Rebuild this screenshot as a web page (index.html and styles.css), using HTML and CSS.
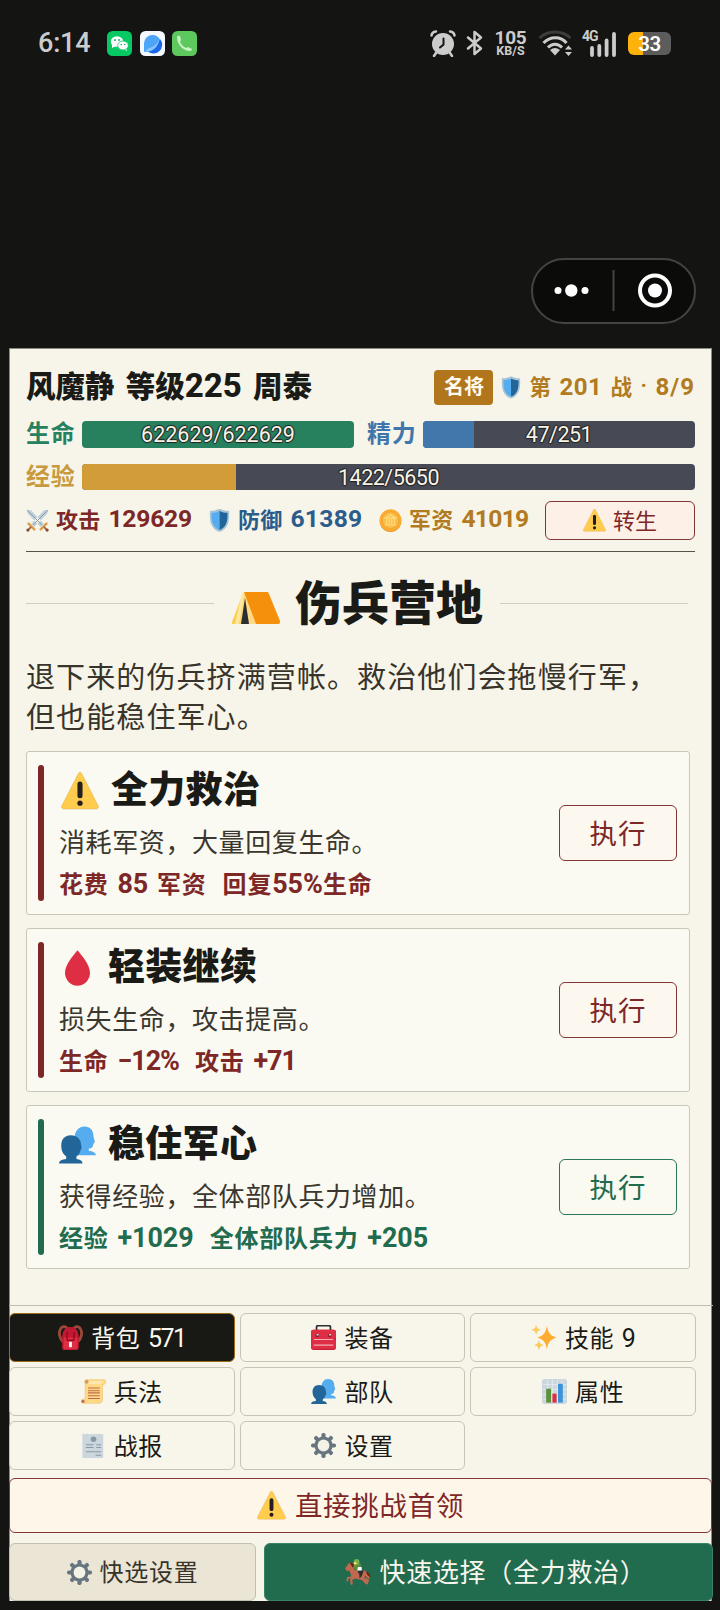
FILE: index.html
```
<!DOCTYPE html>
<html lang="zh-CN">
<head>
<meta charset="utf-8">
<title>伤兵营地</title>
<link rel="stylesheet" href="styles.css">
</head>
<body>
<svg class="defs" width="0" height="0" aria-hidden="true">
  <defs>
    <symbol id="warn" viewBox="0 0 36 36"><path fill="#FFCC4D" stroke="#d9b457" stroke-width=".5" d="M2.65 35C.81 35-.04 33.66.77 32.02L16.53 1.23c.81-1.64 2.13-1.64 2.94 0l15.76 30.79c.81 1.64-.04 2.98-1.88 2.98z"/><path fill="#231F20" d="M15.6 11.5a2.4 2.4 0 0 1 4.8 0v11a2.4 2.4 0 0 1-4.8 0z"/><circle cx="18" cy="29.5" r="2.5" fill="#231F20"/></symbol>
    <symbol id="shield" viewBox="0 0 33 36"><path fill="#a9c5d6" d="M31.500 3s-5 0-8-1c-3-1-5-2-7-2s-4 1-7 2-8 1-8 1-1 14 2 21 8 11 13 12c5-1 10-5 13-12S31.500 3 31.500 3z"/><path fill="#55ACEE" d="M16.500 3c-4 2-8 3-12.500 3 0 10 .5 14 2.500 18 2 4 6 8 10 9z"/><path fill="#226699" d="M16.500 3c4 2 8 3 12.500 3 0 10-.5 14-2.500 18-2 4-6 8-10 9z"/></symbol>
    <symbol id="swords" viewBox="0 0 36 36"><path fill="#c5d1da" d="M1 1l7 1 20 21-5 5L3 8zM35 1l-7 1L8 23l5 5L33 8z"/><path fill="none" stroke="#8299aa" stroke-width="1.500" d="M2 2l23 23M34 2L11 25"/><path stroke="#d99e52" stroke-width="4" stroke-linecap="round" d="M4 23l9 9M32 23l-9 9"/><path stroke="#a76539" stroke-width="3" d="M8 28l-5 5M28 28l5 5"/><circle cx="3" cy="33" r="2.500" fill="#8a4b38"/><circle cx="33" cy="33" r="2.500" fill="#8a4b38"/></symbol>
    <symbol id="coin" viewBox="0 0 36 36"><circle cx="18" cy="19" r="17" fill="#e79625"/><circle cx="18" cy="17.500" r="17" fill="#ffac33"/><circle cx="18" cy="17.500" r="13" fill="#f9bd48" stroke="#e69c2d"/><path fill="none" stroke="#ffdc7c" stroke-width="2" d="M10 14l8-5 8 5zM12 15v8M16 15v8M20 15v8M24 15v8M9 25h18"/></symbol>
    <symbol id="tent" viewBox="0 0 48 32"><path fill="#ffcc4d" d="M11 1h4L25 30c0 2-1 2-3 2H1c-1 0-1-1-1-2z"/><path fill="#ffe8a0" d="M10 1h3l-6 31H3z"/><path fill="#f4900c" d="M12 0h23c1 0 1 0 2 2l11 27c0 2 0 3-2 3H24z"/><path fill="#ffd983" d="M12 1l-4 31h4l1-26 4 26h7z"/><path fill="#292f33" d="M13 6L9 32h8z"/></symbol>
    <symbol id="drop" viewBox="0 0 26 37"><path fill="#DD2E44" d="M0 23.500C0 15 9 5 13 0c4 5 13 15 13 23.500C26 31 20.200 37 13 37S0 31 0 23.500z"/></symbol>
    <symbol id="people" viewBox="0 0 36 36"><path fill="#55ACEE" d="M24.500 0C30.500 0 33.500 4 33.500 9c0 2 1.300 4 1.300 5.500s-1.300 1.500-1.500 3c-.3 2-1 4-4.300 4v2c3 .5 6.500 1 7 4.500H15V12c0-7 4-12 9.500-12z"/><path fill="#269" d="M11.500 8.500c6 0 10 4 10 9.500 0 1.500.8 2 .4 3.500-.4 1-.9 1-1.200 2.500-.5 2-2 4-3.700 5v2.500c3 .5 5.500 1 6 4.500H0c.3-3.500 3-4 7-4.500V29c-3-2-4.800-5-4.800-10.500 0-6 3.300-10 9.300-10z"/></symbol>
    <symbol id="backpack" viewBox="0 0 36 36"><path fill="none" stroke="#9c4839" stroke-width="4" d="M8 25C2 20 1 11 3 7c3-7 10-6 11 1M28 25c6-5 7-14 5-18-3-7-10-6-11 1"/><path fill="#be1931" d="M11 5c0-3 14-3 14 0 4 3 5 8 5 13v14c0 3-2 4-4 4H10c-3 0-4-1-4-4V18c0-5 1-10 5-13z"/><path fill="#dd2e44" d="M8 18h20v14c0 3-2 3-4 3H12c-3 0-4 0-4-3z"/><path stroke="#a0041e" stroke-width="2" d="M13 10v12h10V10" fill="none"/><rect x="16" y="24" width="4" height="8" rx="1" fill="#fff"/></symbol>
    <symbol id="toolbox" viewBox="0 0 36 36"><path fill="none" stroke="#292f33" stroke-width="2.500" d="M8 8V3q0-2 2-2h16q2 0 2 2v5"/><rect y="7" width="36" height="29" rx="4" fill="#be1931"/><rect y="7" width="36" height="14" rx="3" fill="#dd2e44"/><path fill="#dd2e44" d="M0 21h36v11q0 3-4 3H4q-4 0-4-3z"/><path stroke="#f4abba" stroke-width="1.500" d="M4 21h28M4 29h28"/><circle cx="9" cy="15" r="2.500" fill="#8b1c2b"/><circle cx="27" cy="15" r="2.500" fill="#8b1c2b"/><path stroke="#ccd6dd" stroke-width="2" d="M8 14h3M26 14h3"/></symbol>
    <symbol id="spark" viewBox="0 0 36 36"><path fill="#FFAC33" d="M21.500 1c2 11 5 14 14 17-9 3-12 6-14 17-2-11-5-14-14-17 9-3 12-6 14-17z"/><path fill="#FFCC4D" stroke="#e7b54b" stroke-width=".5" d="M6 1c1 4 2 5 6 6-4 1-5 2-6 6-1-4-2-5-6-6 4-1 5-2 6-6zM10 23c1 4 2 5 6 6-4 1-5 2-6 6-1-4-2-5-6-6 4-1 5-2 6-6z"/></symbol>
    <symbol id="scroll" viewBox="0 0 36 36"><path fill="#ffd983" stroke="#e5b961" stroke-width=".7" d="M7 1h26q3 0 3 3t-3 4h-2v22q0 5-5 5H3q-3 0-3-3t4-3h2V5z"/><path fill="#ffe8b6" d="M6 3h24v4H10z"/><circle cx="8" cy="4" r="3" fill="#d99e52"/><circle cx="3" cy="32" r="2.300" fill="#c1694f"/><path stroke="#c1694f" stroke-width="1.500" d="M10 13h17M10 17h17M10 20h17M10 24h17M10 28h17"/></symbol>
    <symbol id="chart" viewBox="0 0 36 36"><rect width="36" height="36" rx="4" fill="#ccd6dd"/><path stroke="#e9eff3" stroke-width="1" d="M1 8h34M1 15h34M1 22h34M1 29h34M8 1v34M15 1v34M22 1v34M29 1v34"/><path fill="#5c913b" d="M6 14h7v20H6z"/><path fill="#dd2e44" d="M15 21h6v13h-6z"/><path fill="#3b94d9" d="M23 7h7v27h-7z"/></symbol>
    <symbol id="report" viewBox="0 0 32 36"><path fill="#ccd6dd" d="M0 1h2l2 1 2-1h2l2 1 2-1h2l2 1 2-1h2l2 1 2-1h2l2 1 2-1v35H0z"/><circle cx="16" cy="9" r="4" fill="#8899a6"/><path stroke="#8899a6" stroke-width="1.500" d="M5 17h11M20 17h7M5 21h11M20 21h7M5 27h22M19 32h8"/></symbol>
    <symbol id="gear" viewBox="0 0 36 36"><g fill="#66757F"><rect x="15" y="0" width="6" height="36" rx="2.500"/><rect x="15" y="0" width="6" height="36" rx="2.500" transform="rotate(45 18 18)"/><rect x="15" y="0" width="6" height="36" rx="2.500" transform="rotate(90 18 18)"/><rect x="15" y="0" width="6" height="36" rx="2.500" transform="rotate(135 18 18)"/><circle cx="18" cy="18" r="13"/></g><circle cx="18" cy="18" r="8.500" class="gear-hole"/></symbol>
    <symbol id="horse" viewBox="0 0 36 36"><path fill="#c1694f" d="M0 13l6-8 5 2 5 9h11l6 4 1 8-3-1-3-4-1 4 4 4-2 4-6-6-9-2-4 2 1 6-3 1-1-7 2-5-3-8-3 1z"/><path fill="none" stroke="#c1694f" stroke-width="2.500" d="M12 25l-8 1-1 5M28 27l4 3-2 5"/><path fill="#662113" d="M6 5l6 2 5 7-4 1zM29 17q6 2 6 8l-4-3z"/><path fill="#5c913b" d="M12 8l9-2 3 9-5 4-5-5-3 0z"/><path fill="#292f33" d="M17 16h9l-3 8-3 3v-5z"/><path fill="#fff" d="M18 11h5v5h-6z"/><circle cx="16" cy="4" r="4" fill="#77b255"/><circle cx="14" cy="6" r="2" fill="#ffdc5d"/></symbol>
  </defs>
</svg>

<div class="statusbar">
  <span class="clock">6:14</span>
  <svg class="app-ico" viewBox="0 0 25 25"><rect width="25" height="25" rx="5.500" fill="#07c963"/><ellipse cx="10" cy="10.500" rx="6.200" ry="5.300" fill="#fff"/><path fill="#fff" d="M5 13l0 4 4-2zM19 16l1 4-4-2z"/><ellipse cx="16" cy="14.500" rx="5.300" ry="4.500" fill="#fff" stroke="#07c963" stroke-width=".8"/><g fill="#07a650"><circle cx="8" cy="9" r=".9"/><circle cx="12" cy="9" r=".9"/><circle cx="14.300" cy="13.500" r=".7"/><circle cx="17.800" cy="13.500" r=".7"/></g></svg>
  <svg class="app-ico" viewBox="0 0 25 25"><rect width="25" height="25" rx="5.500" fill="#f5f8fe"/><path fill="#4ca5f8" d="M4 21V12.500A8.500 8.500 0 1 1 12.500 21z"/><path fill="#1969e8" d="M20 8a8.500 8.500 0 0 1-13 11.500C14 19 17 15 20 8z"/><path fill="#8cc5fa" d="M4 21l5-4c5-1 8-4 10.500-8.500C18 16 13 20 8 20.500z"/></svg>
  <svg class="app-ico" viewBox="0 0 25 25"><rect width="25" height="25" rx="5.500" fill="#5cc85e"/><path fill="#c9f2c5" d="M5 6q1-2 3-1l1 4-1 2q2 4 6 6l2-1 4 2q0 2-2 2C11 20 5 13 5 6z"/></svg>
  <span class="spacer"></span>
  <svg class="alarm" viewBox="0 0 26 27"><circle cx="13" cy="14" r="11" fill="#ccc"/><path stroke="#ccc" stroke-width="2.500" stroke-linecap="round" fill="none" d="M1.500 5.500Q2 2 6 1.500M24.500 5.500Q24 2 20 1.500M6 23l-2 3M20 23l2 3"/><path stroke="#141412" stroke-width="2" stroke-linecap="round" fill="none" d="M13.500 8.500v6l-3.500 3"/></svg>
  <svg class="bt" viewBox="0 0 17 26"><path fill="none" stroke="#ccc" stroke-width="2.500" stroke-linejoin="round" stroke-linecap="round" d="M2 7.500l13 11-6.500 5.500V2L15 7.500l-13 11"/></svg>
  <span class="net"><span class="rate">105</span><span class="unit">KB/S</span></span>
  <svg class="wifi" viewBox="0 0 36 27"><path fill="none" stroke="#3c3c3b" stroke-width="2.800" d="M1.500 8C10 0 24 0 32.500 8"/><path fill="none" stroke="#ccc" stroke-width="3" d="M5.500 13C12 6 23 6 28.500 13M10 17.500C14 13 20 13 24 17.500"/><path fill="#ccc" d="M12 20q5-4 10 0l-5 5.500zM27 19.500l3.500-4 3.500 4zM27 22l3.500 4 3.500-4z"/></svg>
  <span class="cell"><span class="gen">4G</span><svg class="bars" viewBox="0 0 26 25"><path stroke="#ccc" stroke-width="3.800" stroke-linecap="round" d="M2 16v7M9.300 14v9M16.600 8.500v14.500M24 2v21"/></svg></span>
  <span class="battery">33</span>
</div>

<div class="capsule">
  <svg viewBox="0 0 164 65" width="164" height="65"><g fill="#fff"><circle cx="27" cy="32.500" r="3.500"/><circle cx="40.300" cy="32.500" r="6.200"/><circle cx="54" cy="32.500" r="3.500"/><circle cx="124" cy="32.500" r="7"/></g><circle cx="124" cy="32.500" r="15" fill="none" stroke="#fff" stroke-width="4"/><path stroke="#444443" stroke-width="2" d="M82.500 12v41"/></svg>
</div>

<main class="app">
  <section class="hero">
    <div class="row name-row">
      <h1 class="name">风魔静 等级<span class="n">225</span> 周泰</h1>
      <span class="badge">名将</span>
      <svg class="ico-shield"><use href="#shield"/></svg>
      <span class="progress"><span>第</span><span class="n">201</span><span>战</span><span class="dot">·</span><span class="n">8/9</span></span>
    </div>
    <div class="row bars-row">
      <span class="label hp">生命</span>
      <div class="bar"><div class="fill fill-hp" style="width:100%"></div><span class="val">622629/622629</span></div>
      <span class="label mp">精力</span>
      <div class="bar"><div class="fill fill-mp" style="width:18.700%"></div><span class="val tight">47/251</span></div>
    </div>
    <div class="row exp-row">
      <span class="label xp">经验</span>
      <div class="bar"><div class="fill fill-xp" style="width:25.200%"></div><span class="val tight">1422/5650</span></div>
    </div>
    <div class="row stats-row">
      <span class="stat atk"><svg><use href="#swords"/></svg><span>攻击</span><span class="n">129629</span></span>
      <span class="stat def"><svg><use href="#shield"/></svg><span>防御</span><span class="n">61389</span></span>
      <span class="stat gold"><svg><use href="#coin"/></svg><span>军资</span><span class="n">41019</span></span>
      <button class="rebirth"><svg><use href="#warn"/></svg><span>转生</span></button>
    </div>
  </section>

  <section class="scene">
    <h2 class="scene-title"><svg><use href="#tent"/></svg><span>伤兵营地</span></h2>
    <p class="story">退下来的伤兵挤满营帐。救治他们会拖慢行军，<br>但也能稳住军心。</p>
    <div class="cards">
      <article class="card danger">
        <div class="body">
          <h3><svg class="i-warn"><use href="#warn"/></svg>全力救治</h3>
          <p class="desc">消耗军资，大量回复生命。</p>
          <p class="effect"><span>花费 <span class="n">85</span> 军资</span><span>回复<span class="n">55%</span>生命</span></p>
        </div>
        <button class="go"><span>执行</span></button>
      </article>
      <article class="card danger">
        <div class="body">
          <h3><svg class="i-drop"><use href="#drop"/></svg>轻装继续</h3>
          <p class="desc">损失生命，攻击提高。</p>
          <p class="effect tight"><span>生命 <span class="n">−12%</span></span><span>攻击 <span class="n">+71</span></span></p>
        </div>
        <button class="go"><span>执行</span></button>
      </article>
      <article class="card good">
        <div class="body">
          <h3><svg class="i-people"><use href="#people"/></svg>稳住军心</h3>
          <p class="desc">获得经验，全体部队兵力增加。</p>
          <p class="effect"><span>经验 <span class="n">+1029</span></span><span>全体部队兵力 <span class="n">+205</span></span></p>
        </div>
        <button class="go"><span>执行</span></button>
      </article>
    </div>
  </section>

  <footer class="dock">
    <nav class="tabs">
      <button class="tab active"><svg><use href="#backpack"/></svg><span>背包 <span class="n">571</span></span></button>
      <button class="tab"><svg><use href="#toolbox"/></svg><span>装备</span></button>
      <button class="tab"><svg><use href="#spark"/></svg><span>技能 <span class="n">9</span></span></button>
      <button class="tab"><svg><use href="#scroll"/></svg><span>兵法</span></button>
      <button class="tab"><svg><use href="#people"/></svg><span>部队</span></button>
      <button class="tab"><svg><use href="#chart"/></svg><span>属性</span></button>
      <button class="tab"><svg><use href="#report"/></svg><span>战报</span></button>
      <button class="tab"><svg><use href="#gear"/></svg><span>设置</span></button>
    </nav>
    <button class="boss"><svg><use href="#warn"/></svg><span>直接挑战首领</span></button>
    <div class="quick">
      <button class="quick-set"><svg><use href="#gear"/></svg><span>快选设置</span></button>
      <button class="quick-go"><svg><use href="#horse"/></svg><span>快速选择（全力救治）</span></button>
    </div>
  </footer>
</main>
</body>
</html>
```
FILE: styles.css
```
* { box-sizing: border-box; margin: 0; padding: 0; }
body {
  width: 720px;
  height: 1610px;
  overflow: hidden;
  background: #141412;
  color: #1a1a17;
  font-family: Roboto, "Noto Sans CJK SC", sans-serif;
}
button { font: inherit; background: none; display: flex; align-items: center; justify-content: center; white-space: pre; }
button > span { padding-bottom: 3px; }
svg { display: block; flex: none; }
.defs { position: absolute; }
.n { font-size: 1.12em; line-height: 1; }

/* status bar */
.statusbar { height: 86px; display: flex; align-items: center; padding: 0 48px 0 38px; color: #ccc; }
.clock { width: 69px; font-size: 27px; font-weight: 500; letter-spacing: -.2px; }
.app-ico { width: 25px; height: 25px; margin-right: 7.500px; }
.spacer { flex: 1; }
.alarm { width: 26px; height: 27px; margin-right: 10px; }
.bt { width: 17px; height: 26px; margin-right: 11px; }
.net { width: 33px; display: flex; flex-direction: column; align-items: center; font-weight: 700; margin-right: 11px; }
.rate { font-size: 19px; line-height: 15px; letter-spacing: -.3px; }
.unit { font-size: 12.500px; line-height: 12px; }
.wifi { width: 36px; height: 27px; margin-right: 8px; }
.cell { width: 34px; height: 27px; position: relative; display: flex; align-items: flex-end; justify-content: flex-end; margin-right: 12px; }
.gen { position: absolute; left: 0; top: -1px; font-size: 14px; line-height: 14px; font-weight: 700; letter-spacing: -1px; }
.bars { width: 26px; height: 25px; }
.battery {
  width: 43px; height: 23px; border-radius: 6px; margin-right: 1px;
  background: linear-gradient(90deg, #ffb20a 15px, #5c5c5c 15px);
  color: #fff; font-size: 20.500px; font-weight: 600; line-height: 24px; text-align: center; letter-spacing: -.5px;
}

.capsule { width: 165px; height: 66px; margin: 172px 0 24px 531px; border: 2px solid #444443; border-radius: 33px; background: #0b0b0a; }
.capsule svg { margin: -2px -2.500px; }

.app { position: relative; width: 703px; height: 1253px; margin: 0 0 0 9px; background: #f7f5e9; border: 1px solid #8c8a80; border-bottom: 0; }

/* character summary */
.hero { padding: 18px 16px 0; height: 203px; }
.row { display: flex; align-items: center; white-space: pre; }
.name-row { height: 40px; font-weight: 700; }
.name { flex: 1; font-size: 29.500px; line-height: 40px; font-weight: 800; word-spacing: 3.800px; }
.badge { width: 59px; height: 35px; border-radius: 4px; background: #b1761b; color: #fffaf0; font-size: 20px; line-height: 34px; text-align: center; }
.ico-shield { width: 20px; height: 23px; margin: 0 8px 0 8px; }
.progress { display: flex; align-items: center; gap: 8px; font-size: 21.500px; color: #b27b21; letter-spacing: .5px; }
.progress > span { padding-bottom: 3px; }
.progress > .n { padding: 0; letter-spacing: .5px; }
.progress > .n:last-child { letter-spacing: 1px; }
.bars-row { margin-top: 14px; height: 27px; }
.exp-row { margin-top: 16px; height: 26px; }
.label { width: 56px; font-size: 24px; font-weight: 700; letter-spacing: .7px; line-height: 27px; }
.mp.label { margin-left: 13px; }
.hp { color: #26815f; } .mp { color: #4076ab; } .xp { color: #c9993e; }
.bar { flex: 1; height: 100%; position: relative; border-radius: 4px; overflow: hidden; background: #474955; }
.fill { height: 100%; }
.fill-hp { background: #27815f; } .fill-mp { background: #4177ab; } .fill-xp { background: #d29c38; }
.val {
  position: absolute; inset: 0; text-align: center; line-height: 27px; font-size: 21.500px; color: #f7f3e6;
  text-shadow: 1px 0 1px #222, -1px 0 1px #222, 0 1px 1px #222, 0 -1px 1px #222;
}
.val.tight { letter-spacing: -.5px; }
.stats-row { margin-top: 11px; height: 38px; }
.stat { display: flex; align-items: center; font-size: 22px; font-weight: 700; letter-spacing: .2px; }
.stat svg { width: 23px; height: 23px; margin-right: 7px; }
.stat > span { padding-bottom: 5px; }
.stat > .n { margin-left: 8px; padding: 0 0 1px; letter-spacing: -.2px; }
.def > .n { letter-spacing: .3px; }
.gold > .n { letter-spacing: -.7px; }
.atk { width: 182px; color: #7d2827; } .def { width: 171px; color: #2b5c8c; } .gold { width: 166px; color: #b27b21; }
.rebirth { margin-left: auto; width: 150px; height: 39px; border: 1.500px solid #823737; border-radius: 6px; background: #fdf0e7; color: #7d2827; font-size: 22px; }
.rebirth svg { width: 23px; height: 23px; margin-right: 7px; }

/* scene */
.scene { margin: 0 16px; border-top: 1px solid #55534a; position: relative; top: -1px; }
.scene-title { width: 662px; height: 102px; display: flex; align-items: center; font-size: 47px; line-height: 60px; font-weight: 800; }
.scene-title::before, .scene-title::after { content: ""; flex: 1; height: 1px; background: #cfcdc0; }
.scene-title svg { width: 48px; height: 32px; margin: 9px 15px 0 18px; }
.scene-title span { margin-right: 17px; padding-top: 2px; }
.story { margin-top: 4px; font-size: 29px; letter-spacing: 1.100px; line-height: 40px; color: #38342b; white-space: nowrap; }
.cards { width: 664px; margin-top: 13px; display: grid; gap: 13px; }
.card { height: 164px; padding: 13px 12px 13px 11px; border: 1px solid #c9c7b8; border-radius: 3px; background: #fbfaf2; display: flex; align-items: center; }
.card::before { content: ""; width: 6px; height: 136px; margin-right: 15px; border-radius: 3px; background: currentColor; }
.danger { color: #7d2827; } .good { color: #216b4e; }
.body { flex: 1; height: 138px; padding-top: 3px; }
.body p { white-space: pre; }
.body h3 { height: 48px; display: flex; align-items: center; font-size: 37px; line-height: 48px; font-weight: 800; letter-spacing: .3px; color: #1a1a17; }
.i-warn { width: 38px; height: 38px; margin: 0 12px 0 2px; }
.i-drop { width: 25px; height: 36px; margin: 0 18px 0 6px; }
.i-people { width: 37px; height: 38px; margin-right: 12px; }
.desc { height: 42px; line-height: 57px; font-size: 26px; letter-spacing: .6px; color: #3a372e; }
.effect { display: flex; gap: 16px; height: 57px; line-height: 57px; font-size: 24px; font-weight: 700; letter-spacing: .8px; word-spacing: 2px; }
.effect .n { letter-spacing: 0; }
.effect.tight .n { letter-spacing: -1px; }
.go { width: 118px; height: 56px; border: 1.500px solid #823737; border-radius: 6px; background: #fcf8f0; color: #7d2827; font-size: 27.500px; letter-spacing: 1px; }
.good .go { border-color: #2b7558; color: #216b4e; background: #fafaf1; }

/* bottom dock */
.dock { position: absolute; top: 956px; left: -1px; width: 704px; border-top: 1px solid #bfbdb1; }
.tabs { margin-top: 7px; width: 687px; display: grid; grid-template-columns: repeat(3, 1fr); grid-auto-rows: 49px; gap: 5px; }
.tab { border: 1px solid #c6c3b7; border-radius: 6px; background: #f8f6eb; font-size: 24px; letter-spacing: .6px; color: #1a1a17; }
.tab svg { width: 25px; height: 25px; margin-right: 8px; }
.tab .n { font-size: 1.04em; letter-spacing: -1.500px; margin-left: 1px; }
.tab.active { background: #181815; color: #faf8ef; border-color: #9c6c18; }
.gear-hole { fill: #f4f1e6; }
.boss { margin-top: 8px; width: 703px; height: 55px; border: 1.500px solid #823737; border-radius: 6px; background: #fff6ea; color: #7d2827; font-size: 27.500px; letter-spacing: .7px; }
.boss svg { width: 29px; height: 29px; margin-right: 9px; }
.quick { margin-top: 10px; display: flex; gap: 8px; }
.quick button { height: 58px; border-radius: 6px; }
.quick-set { width: 247px; background: #eae5d5; border: 1px solid #c2bfaf; font-size: 24px; letter-spacing: .7px; color: #38342b; }
.quick-set svg { width: 25px; height: 25px; margin-right: 8px; }
.quick-go { flex: 1; padding-left: 14px; background: #216b4e; border: 1px solid #388265; color: #f9f7ed; font-size: 26px; letter-spacing: .7px; }
.quick-go svg { width: 28px; height: 26px; margin-right: 7px; }
```
